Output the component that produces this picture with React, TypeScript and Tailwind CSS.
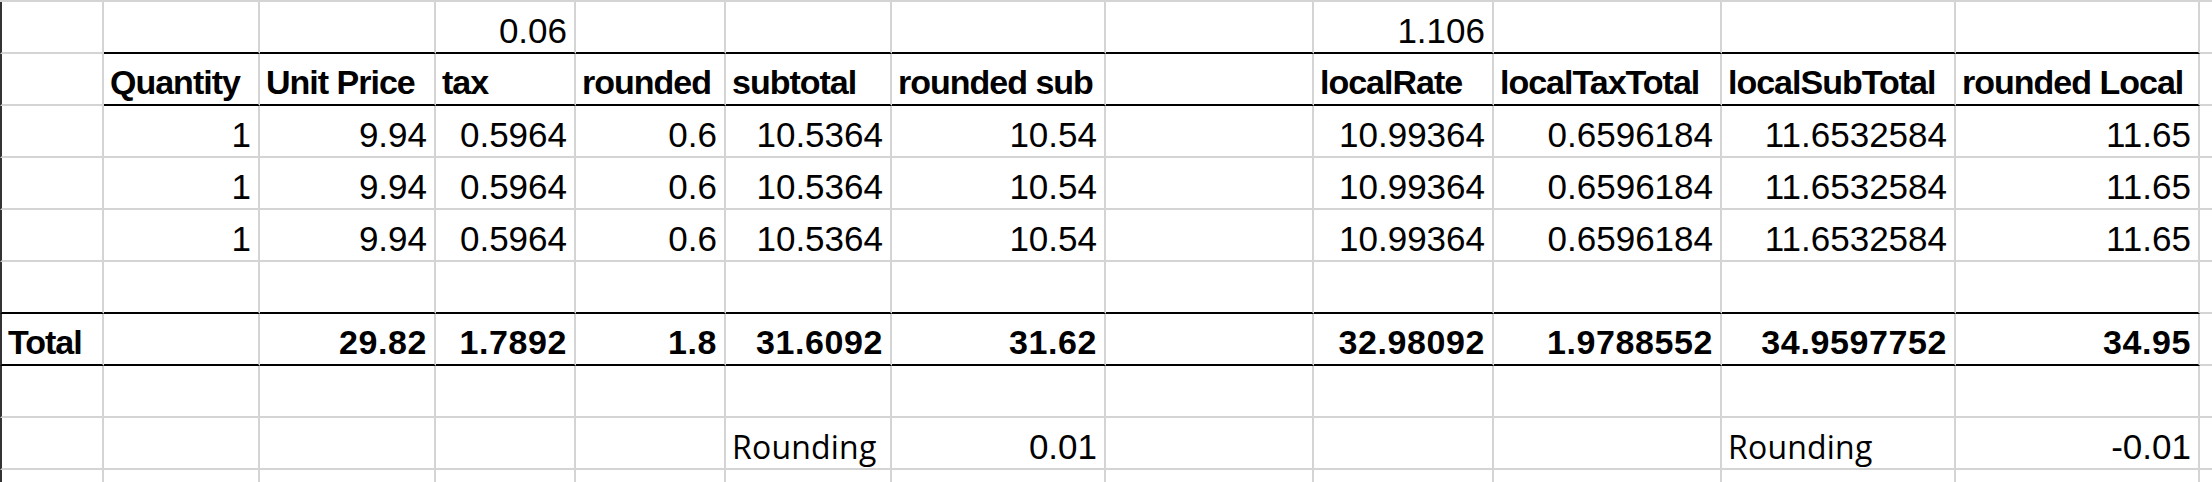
import React from 'react';

type Cell = { v: string; bold?: boolean; left?: boolean; note?: boolean };

const E: Cell = { v: '' };
const num = (v: string): Cell => ({ v });
const bnum = (v: string): Cell => ({ v, bold: true });
const head = (v: string): Cell => ({ v, bold: true, left: true });
const note = (v: string): Cell => ({ v, left: true, note: true });

const dataRow: Cell[] = [
  E, num('1'), num('9.94'), num('0.5964'), num('0.6'), num('10.5364'), num('10.54'),
  E, num('10.99364'), num('0.6596184'), num('11.6532584'), num('11.65'),
];
const emptyRow: Cell[] = Array.from({ length: 12 }, () => E);

const rows: Cell[][] = [
  [E, E, E, num('0.06'), E, E, E, E, num('1.106'), E, E, E],
  [
    E, head('Quantity'), head('Unit Price'), head('tax'), head('rounded'), head('subtotal'),
    head('rounded sub'), E, head('localRate'), head('localTaxTotal'), head('localSubTotal'),
    head('rounded Local'),
  ],
  dataRow,
  dataRow,
  dataRow,
  emptyRow,
  [
    head('Total'), E, bnum('29.82'), bnum('1.7892'), bnum('1.8'), bnum('31.6092'), bnum('31.62'),
    E, bnum('32.98092'), bnum('1.9788552'), bnum('34.9597752'), bnum('34.95'),
  ],
  emptyRow,
  [E, E, E, E, E, note('Rounding'), num('0.01'), E, E, E, note('Rounding'), num('-0.01')],
];

// which cells get the heavy black bottom rule
const heavyBottom = (r: number, c: number) => {
  if (r === 0 || r === 1) return c >= 1;
  if (r === 5 || r === 6) return true;
  return false;
};

function SheetCell({ cell, r, c }: { cell: Cell; r: number; c: number }) {
  const heavy = heavyBottom(r, c);
  const border = heavy ? 'border-b-2 border-b-black' : 'border-b-2 border-b-[#d4d4d4]';
  const leftEdge = c === 0 ? 'border-l-2 border-l-[#333333]' : '';
  const align = cell.left ? 'justify-start pl-[6px]' : 'justify-end pr-[7px]';
  const face = cell.note
    ? "font-['Open_Sans',sans-serif] text-[32px] tracking-[0.2px]"
    : cell.bold
      ? cell.left
        ? 'text-[34px] font-bold tracking-[-1px]'
        : 'text-[34px] font-bold tracking-[0.6px]'
      : 'text-[35px]';

  return (
    <div
      className={`flex h-[52px] items-end overflow-visible whitespace-nowrap border-r-2 border-r-[#d4d4d4] pb-[5px] ${border} ${leftEdge} ${align}`}
    >
      <span className={`leading-[33px] ${face}`}>{cell.v}</span>
    </div>
  );
}

export default function App() {
  return (
    <div className="h-[482px] w-[2212px] overflow-hidden bg-white text-black font-['Liberation_Sans',Arial,sans-serif]">
      <div className="border-t-2 border-t-[#d4d4d4]">
        <div className="grid grid-cols-[104px_156px_176px_140px_150px_166px_214px_208px_180px_228px_234px_244px_1fr]">
          {rows.map((row, r) => (
            <React.Fragment key={r}>
              {row.map((cell, c) => (
                <SheetCell key={c} cell={cell} r={r} c={c} />
              ))}
              {/* partial column at the far right */}
              <div className="h-[52px] border-b-2 border-b-[#d4d4d4]" />
            </React.Fragment>
          ))}
          {/* partial row at the bottom */}
          {Array.from({ length: 13 }, (_, c) => (
            <div
              key={c}
              className={`h-[20px] ${c < 12 ? 'border-r-2 border-r-[#d4d4d4]' : ''} ${c === 0 ? 'border-l-2 border-l-[#333333]' : ''}`}
            />
          ))}
        </div>
      </div>
    </div>
  );
}
